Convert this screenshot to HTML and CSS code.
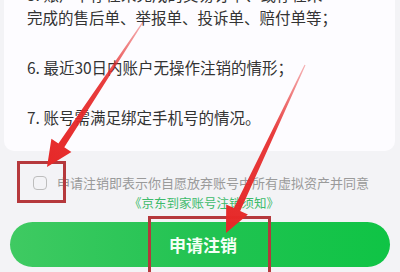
FILE: index.html
```html
<!DOCTYPE html>
<html lang="zh">
<head>
<meta charset="utf-8">
<link rel="stylesheet" href="styles.css">
</head>
<body>
<div class="page">
  <section class="card">
    <p class="item">5. 账户中存在未完成的交易订单、或存在未<br>完成的售后单、举报单、投诉单、赔付单等；</p>
    <p class="item">6. 最近30日内账户无操作注销的情形；</p>
    <p class="item">7. 账号需满足绑定手机号的情况。</p>
  </section>
  <div class="agree">
    <div class="agree-row">
      <span class="checkbox"></span>
      <span class="agree-text">申请注销即表示你自愿放弃账号中所有虚拟资产并同意</span>
    </div>
    <div class="agree-link">《京东到家账号注销须知》</div>
  </div>
  <button class="submit">申请注销</button>

  <svg class="marks" width="400" height="272" viewBox="0 0 400 272">
    <defs>
      <linearGradient id="g1" gradientUnits="userSpaceOnUse" x1="143" y1="22" x2="47" y2="167">
        <stop offset="0" stop-color="#e62828" stop-opacity="0.35"/>
        <stop offset="0.4" stop-color="#e62828" stop-opacity="0.9"/>
        <stop offset="1" stop-color="#e62828"/>
      </linearGradient>
      <linearGradient id="g2" gradientUnits="userSpaceOnUse" x1="305" y1="65" x2="226" y2="233">
        <stop offset="0" stop-color="#e62828" stop-opacity="0.35"/>
        <stop offset="0.4" stop-color="#e62828" stop-opacity="0.9"/>
        <stop offset="1" stop-color="#e62828"/>
      </linearGradient>
    </defs>
    <rect x="18.5" y="162.5" width="46" height="39" fill="none" stroke="#b5383c" stroke-width="3"/>
    <rect x="149.5" y="217.5" width="120" height="60" fill="none" stroke="#b5383c" stroke-width="3"/>
    <polygon fill="url(#g1)" points="143.5,22.3 64.3,147.3 71.4,152.0 47,167 51.4,138.7 58.4,143.4 142.5,21.7"/>
    <polygon fill="url(#g2)" points="305.5,65.3 240.2,211.0 247.9,214.6 226,233 226.2,204.4 233.9,208.0 304.5,64.7"/>
  </svg>
</div>
</body>
</html>
```

FILE: styles.css
```css
* { box-sizing: border-box; }
html, body {
  margin: 0;
  padding: 0;
}
body {
  background: #f3f3f6;
  font-family: "Noto Sans CJK SC", "Noto Sans", sans-serif;
  width: 400px;
  height: 272px;
  overflow: hidden;
}
.page {
  position: relative;
  width: 400px;
  height: 272px;
  overflow: hidden;
}
.card {
  margin: -17px 5px 0 4px;
  background: #fdfcff;
  border-radius: 0 0 10px 10px;
  padding: 0 10px 22px 23px;
}
.item {
  margin: 0 0 27px;
  font-size: 15.5px;
  line-height: 23px;
  color: #333333;
  white-space: nowrap;
}
.item:last-child { margin-bottom: 0; }

.agree {
  margin-top: 22px;
  display: flex;
  flex-direction: column;
}
.agree-row {
  display: flex;
  align-items: center;
  padding-left: 33px;
  height: 20px;
}
.checkbox {
  width: 14px;
  height: 14px;
  border: 1.5px solid #bdbdbd;
  border-radius: 4px;
  margin-right: 10px;
  flex: none;
}
.agree-text {
  font-size: 13px;
  line-height: 20px;
  color: #9a9a9a;
  white-space: nowrap;
}
.agree-link {
  font-size: 12.5px;
  line-height: 20px;
  color: #3dbb6b;
  padding-left: 129px;
  white-space: nowrap;
}
.submit {
  display: flex;
  align-items: center;
  justify-content: center;
  margin: 9px 10px 0;
  width: 380px;
  height: 45px;
  border: none;
  border-radius: 23px;
  background: linear-gradient(90deg, #3fca62 0%, #22c352 50%, #0fc445 100%);
  color: #f4fff6;
  font-family: "Noto Sans CJK SC", sans-serif;
  font-size: 17px;
  font-weight: 700;
  padding: 0 0 0 6px;
}
.marks {
  position: absolute;
  left: 0;
  top: 0;
  pointer-events: none;
}
```
